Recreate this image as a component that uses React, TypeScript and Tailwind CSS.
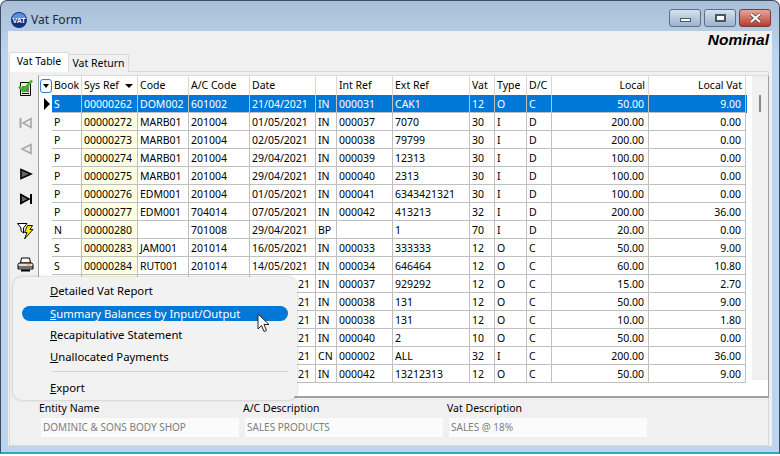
const rows = [
  ["S", "00000262", "DOM002", "601002", "21/04/2021", "IN", "000031", "CAK1", "12", "O", "C", "50.00", "9.00"],
  ["P", "00000272", "MARB01", "201004", "01/05/2021", "IN", "000037", "7070", "30", "I", "D", "200.00", "0.00"],
  ["P", "00000273", "MARB01", "201004", "02/05/2021", "IN", "000038", "79799", "30", "I", "D", "200.00", "0.00"],
  ["P", "00000274", "MARB01", "201004", "29/04/2021", "IN", "000039", "12313", "30", "I", "D", "100.00", "0.00"],
  ["P", "00000275", "MARB01", "201004", "29/04/2021", "IN", "000040", "2313", "30", "I", "D", "100.00", "0.00"],
  ["P", "00000276", "EDM001", "201004", "01/05/2021", "IN", "000041", "6343421321", "30", "I", "D", "100.00", "0.00"],
  ["P", "00000277", "EDM001", "704014", "07/05/2021", "IN", "000042", "413213", "32", "I", "D", "200.00", "36.00"],
  ["N", "00000280", "", "701008", "29/04/2021", "BP", "", "1", "70", "I", "D", "20.00", "0.00"],
  ["S", "00000283", "JAM001", "201014", "16/05/2021", "IN", "000033", "333333", "12", "O", "C", "50.00", "9.00"],
  ["S", "00000284", "RUT001", "201014", "14/05/2021", "IN", "000034", "646464", "12", "O", "C", "60.00", "10.80"],
  // the first columns of these rows sit behind the print menu
  ["", "", "", "", "21", "IN", "000037", "929292", "12", "O", "C", "15.00", "2.70"],
  ["", "", "", "", "21", "IN", "000038", "131", "12", "O", "C", "50.00", "9.00"],
  ["", "", "", "", "21", "IN", "000038", "131", "12", "O", "C", "10.00", "1.80"],
  ["", "", "", "", "21", "IN", "000040", "2", "10", "O", "C", "50.00", "0.00"],
  ["", "", "", "", "21", "CN", "000002", "ALL", "32", "I", "C", "200.00", "36.00"],
  ["", "", "", "", "21", "IN", "000042", "13212313", "12", "O", "C", "50.00", "9.00"],
];

const headers = ["Book", "Sys Ref", "Code", "A/C Code", "Date", "", "Int Ref", "Ext Ref", "Vat", "Type", "D/C", "Local", "Local Vat"];
const gridCols = "grid grid-cols-[30px_56px_51px_61px_66px_21px_56px_77px_25px_32px_25px_97px_97px]";

const Underlined = ({ text }: { text: string }) => (
  <span>
    <span className="underline">{text[0]}</span>
    {text.slice(1)}
  </span>
);

const Field = ({ label, value }: { label: string; value: string }) => (
  <div className="w-[204px]">
    <div className="h-[18px] leading-[16px]">{label}</div>
    <div className="ml-[2px] h-[19px] w-[198px] bg-[#fbfbfb] pl-[2px] text-[10px] leading-[19px] text-[#7d7d7d]">{value}</div>
  </div>
);

export default function App() {
  return (
    <div className="h-[456px] w-[780px] overflow-hidden bg-white font-['Noto_Sans',sans-serif] text-[10.5px] text-black">
      <div className="relative flex h-[454px] w-[780px] flex-col rounded-t-[7px] border border-b-2 border-[#3d4f5f] border-b-[#2fa6c4] bg-gradient-to-b from-[#a9c0d8] to-[#bcd4ec] to-[12%] px-[7px] pb-[6px]">
        {/* Title bar */}
        <div className="flex h-[30px] shrink-0 items-center pt-[7px]">
          <svg width="18" height="18" viewBox="0 0 18 18" className="ml-[2px] mt-[1px]">
            <circle cx="9" cy="9" r="8" fill="#14307c" />
            <path d="M2 8a7 6 0 0 1 14 0z" fill="#5b8fe0" />
            <text x="9" y="11.5" textAnchor="middle" fontSize="7" fontWeight="bold" fill="white" fontFamily="Liberation Sans">VAT</text>
          </svg>
          <span className="ml-[3px] mt-[1px] text-[12px] text-[#1d2a38]">Vat Form</span>
          <div className="ml-auto mt-[-3px] flex gap-[3px] pr-[1px]">
            <div className="flex h-[18px] w-[32px] items-end justify-center rounded-[3px] border border-[#5d6f86] bg-gradient-to-b from-[#d5e1ee] to-[#9db3cc] pb-[4px]">
              <div className="h-[4px] w-[11px] border border-[#48566a] bg-white" />
            </div>
            <div className="flex h-[18px] w-[32px] items-center justify-center rounded-[3px] border border-[#5d6f86] bg-gradient-to-b from-[#d5e1ee] to-[#9db3cc]">
              <div className="h-[8px] w-[11px] border-2 border-[#48566a] bg-white" />
            </div>
            <div className="flex h-[18px] w-[32px] items-center justify-center rounded-[3px] border border-[#7a3a35] bg-gradient-to-b from-[#e4a59b] to-[#b8392b]">
              <svg width="13" height="10" viewBox="0 0 13 10">
                <path d="M2 1l9 8M11 1l-9 8" stroke="#4a3a3a" strokeWidth="3.4" />
                <path d="M2 1l9 8M11 1l-9 8" stroke="white" strokeWidth="2.2" />
              </svg>
            </div>
          </div>
        </div>

        {/* Client area */}
        <div className="flex min-h-0 flex-1 flex-col bg-[#f0f0f0] pr-[3px]">
          <div className="flex h-[21px] items-start justify-end">
            <span className="font-['Liberation_Sans',sans-serif] text-[15.5px] font-bold italic leading-[18px]">Nominal</span>
          </div>
          {/* Tabs */}
          <div className="relative z-10 mb-[-1px] flex h-[20px] items-end pl-[1px]">
            <div className="flex h-[20px] w-[60px] items-center justify-center border border-b-0 border-[#d9d9d9] bg-white pb-[2px]">Vat Table</div>
            <div className="flex h-[18px] w-[60px] items-center justify-center border border-b-0 border-l-0 border-[#d9d9d9] bg-[#f0f0f0]">Vat Return</div>
          </div>
          {/* Tab panel */}
          <div className="ml-[1px] flex min-h-0 flex-1 flex-col border border-[#d9d9d9] bg-[#f0f0f0] pl-[3px] pr-[1px] pt-[3px]">
            <div className="flex h-[323px] shrink-0">
              {/* Toolbar */}
              <div className="flex w-[25px] shrink-0 flex-col items-center">
                <svg width="18" height="20" viewBox="0 0 18 20" className="mt-[3px]">
                  <path d="M3.500 4.500h10v13h-10z" fill="#e8f0d8" stroke="#000" />
                  <path d="M5 9h7M5 11h7M5 13h7M5 15.500h7" stroke="#000" />
                  <path d="M2 8.500l4 4 9-10" fill="none" stroke="#2fbe1c" strokeWidth="2.6" />
                </svg>
                <svg width="14" height="12" viewBox="0 0 14 12" className="mt-[19px]">
                  <path d="M1.500 1v10" stroke="#a8a8a8" strokeWidth="2" />
                  <path d="M12 1.500v9L4 6z" fill="#ececec" stroke="#a8a8a8" strokeWidth="1.600" />
                </svg>
                <svg width="14" height="12" viewBox="0 0 14 12" className="mt-[14px]">
                  <path d="M12 1.500v9L3 6z" fill="#ececec" stroke="#a8a8a8" strokeWidth="1.600" />
                </svg>
                <svg width="14" height="12" viewBox="0 0 14 12" className="mt-[13px]">
                  <path d="M2 1.500v9L12 6z" fill="#666" stroke="#000" strokeWidth="1.600" />
                </svg>
                <svg width="14" height="12" viewBox="0 0 14 12" className="mt-[13px]">
                  <path d="M2 1.500v9L10 6z" fill="#666" stroke="#000" strokeWidth="1.600" />
                  <path d="M12 1v10" stroke="#000" strokeWidth="2" />
                  <path d="M1.500 1v10" stroke="#000" />
                </svg>
                <svg width="18" height="18" viewBox="0 0 18 18" className="mt-[17px]">
                  <path d="M0.500 1.500h9.500L6.500 6v5L4 9V6z" fill="#fff" stroke="#000" />
                  <path d="M10.500 3.500h5l-2.500 4h3L7.500 17l2.500-6.500H7.500z" fill="#ffe800" stroke="#000" strokeWidth="0.900" />
                </svg>
                <svg width="17" height="15" viewBox="0 0 17 15" className="mt-[17px]">
                  <path d="M4.500 1h8l1 5h-10z" fill="#fff" stroke="#000" />
                  <path d="M1 7.500q0-1.500 2-1.500h11q2 0 2 1.500V12H1z" fill="#ddd" stroke="#000" />
                  <path d="M1 10h15" stroke="#000" />
                  <path d="M4 13.500h9" stroke="#000" strokeWidth="2" />
                  <path d="M10 8h3" stroke="#f2d000" strokeWidth="2" />
                </svg>
              </div>

              {/* Grid */}
              <div className="flex h-[323px] w-[731px] shrink-0 border border-b-2 border-[#a0a0a0] border-t-[#dcdcdc] bg-white">
                <div className="w-[13px] shrink-0">
                  <div className="flex h-[19px] items-center justify-center">
                    <div className="flex h-[14px] w-[12px] items-center justify-center rounded-[3px] border border-[#2e7fd0]">
                      <div className="h-0 w-0 border-x-[3px] border-t-[4px] border-x-transparent border-t-black" />
                    </div>
                  </div>
                  <div className="flex h-[18px] items-center justify-end pr-[2px]">
                    <div className="h-0 w-0 border-y-[6px] border-l-[6px] border-y-transparent border-l-black" />
                  </div>
                </div>
                <div className="w-[695px] shrink-0">
                  <div className={`${gridCols} h-[19px]`}>
                    {headers.map((h, i) => (
                      <div
                        key={i}
                        className={`flex items-center border-r border-[#d8d8d8] px-[2px] ${i > 10 ? "justify-end pr-[3px]" : ""} ${i === 1 ? "justify-between pr-[4px]" : ""}`}
                      >
                        {h}
                        {i === 1 && <span className="h-0 w-0 border-x-[4px] border-t-[4px] border-x-transparent border-t-black" />}
                      </div>
                    ))}
                  </div>
                  {rows.map((r, ri) => (
                    <div
                      key={ri}
                      className={`${gridCols} h-[18px] leading-[18px] ${ri === 0 ? "bg-[#0078d7] text-white" : ""}`}
                    >
                      {r.map((c, ci) => (
                        <div
                          key={ci}
                          className={`overflow-hidden whitespace-nowrap border-b border-r border-[#c0c0c0] px-[2px] ${ci > 10 ? "pr-[4px] text-right" : ""} ${ci === 1 && ri > 0 ? "bg-[#ffffe1]" : ""} ${ci === 4 && ri > 9 ? "pl-[48px]" : ""}`}
                        >
                          {c}
                        </div>
                      ))}
                    </div>
                  ))}
                </div>
                <div className="ml-[5px] mt-0 h-[304px] w-[17px] bg-[#f0f0f0] pl-[7px] pt-[19px]">
                  <div className="h-[17px] w-[2px] bg-[#8a8a8a]" />
                </div>
              </div>
            </div>

            {/* Detail fields */}
            <div className="ml-[26px] mt-[2px] flex">
              <Field label="Entity Name" value="DOMINIC & SONS BODY SHOP" />
              <Field label="A/C Description" value="SALES PRODUCTS" />
              <Field label="Vat Description" value="SALES @ 18%" />
            </div>
          </div>
        </div>

        {/* Print menu */}
        <div className="absolute left-[12px] top-[276px] z-20 h-[123px] w-[284px] rounded-[9px] bg-[#f2f2f2] px-[9px] pt-[6px] text-[11.3px] shadow-[0_0_3px_rgba(0,0,0,0.25)]">
          <div className="h-[23px] pl-[28px] leading-[15px]"><Underlined text="Detailed Vat Report" /></div>
          <div className="h-[15px] rounded-full bg-[#0078d7] pl-[28px] leading-[15px] text-white"><Underlined text="Summary Balances by Input/Output" /></div>
          <div className="mt-[6px] h-[22px] pl-[28px] leading-[15px]"><Underlined text="Recapitulative Statement" /></div>
          <div className="h-[15px] pl-[28px] leading-[15px]"><Underlined text="Unallocated Payments" /></div>
          <div className="ml-[30px] mt-[7px] h-px bg-[#d4d4d4]" />
          <div className="mt-[8px] pl-[28px] leading-[15px]"><Underlined text="Export" /></div>
        </div>

        {/* Mouse pointer */}
        <svg width="14" height="21" viewBox="0 0 14 21" className="absolute left-[256px] top-[312px] z-30">
          <path d="M1 1v15l3.500-3.500 2.500 6 2.500-1-2.500-6h5z" fill="white" stroke="#222" />
        </svg>
      </div>
    </div>
  );
}
